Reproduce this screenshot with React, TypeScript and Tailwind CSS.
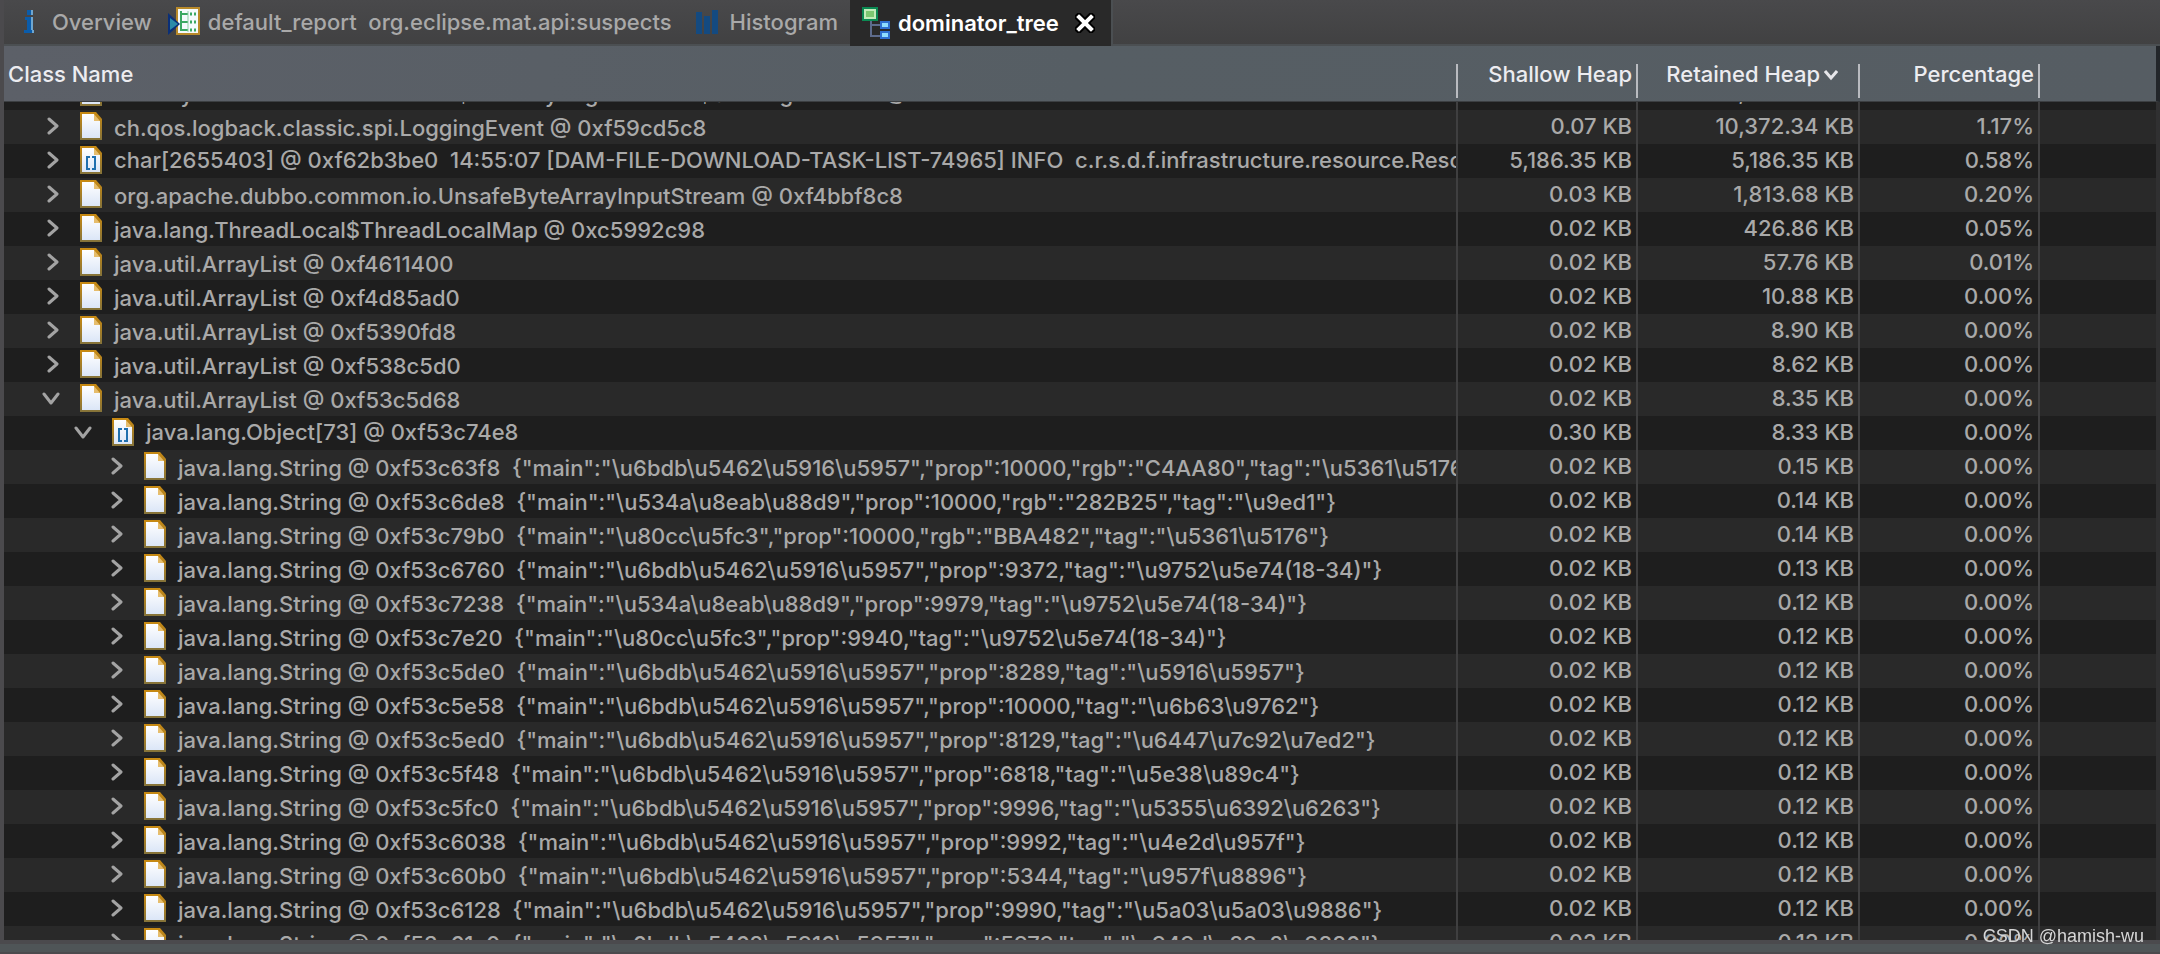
import { useLayoutEffect, useRef } from "react";
import clsx from "clsx";

type Row = {
  name: string;
  shallow: string;
  retained: string;
  percent: string;
  level?: number;
  open?: boolean;
  array?: boolean;
};

const str = (name: string, retained: string): Row => ({
  name: "java.lang.String @ " + name,
  shallow: "0.02 KB",
  retained,
  percent: "0.00%",
  level: 2,
});

const rows: Row[] = [
  { name: "io.netty.buffer.PoolThreadCache$MemoryRegionCache$SubPageEntries @ 0xf59cc8a0", shallow: "0.07 KB", retained: "10,372.34 KB", percent: "1.17%" },
  { name: "ch.qos.logback.classic.spi.LoggingEvent @ 0xf59cd5c8", shallow: "0.07 KB", retained: "10,372.34 KB", percent: "1.17%" },
  {
    name: "char[2655403] @ 0xf62b3be0  14:55:07 [DAM-FILE-DOWNLOAD-TASK-LIST-74965] INFO  c.r.s.d.f.infrastructure.resource.Reso",
    shallow: "5,186.35 KB",
    retained: "5,186.35 KB",
    percent: "0.58%",
    array: true,
  },
  { name: "org.apache.dubbo.common.io.UnsafeByteArrayInputStream @ 0xf4bbf8c8", shallow: "0.03 KB", retained: "1,813.68 KB", percent: "0.20%" },
  { name: "java.lang.ThreadLocal$ThreadLocalMap @ 0xc5992c98", shallow: "0.02 KB", retained: "426.86 KB", percent: "0.05%" },
  { name: "java.util.ArrayList @ 0xf4611400", shallow: "0.02 KB", retained: "57.76 KB", percent: "0.01%" },
  { name: "java.util.ArrayList @ 0xf4d85ad0", shallow: "0.02 KB", retained: "10.88 KB", percent: "0.00%" },
  { name: "java.util.ArrayList @ 0xf5390fd8", shallow: "0.02 KB", retained: "8.90 KB", percent: "0.00%" },
  { name: "java.util.ArrayList @ 0xf538c5d0", shallow: "0.02 KB", retained: "8.62 KB", percent: "0.00%" },
  { name: "java.util.ArrayList @ 0xf53c5d68", shallow: "0.02 KB", retained: "8.35 KB", percent: "0.00%", open: true },
  { name: "java.lang.Object[73] @ 0xf53c74e8", shallow: "0.30 KB", retained: "8.33 KB", percent: "0.00%", level: 1, open: true, array: true },
  str('0xf53c63f8  {"main":"\\u6bdb\\u5462\\u5916\\u5957","prop":10000,"rgb":"C4AA80","tag":"\\u5361\\u5176"}', "0.15 KB"),
  str('0xf53c6de8  {"main":"\\u534a\\u8eab\\u88d9","prop":10000,"rgb":"282B25","tag":"\\u9ed1"}', "0.14 KB"),
  str('0xf53c79b0  {"main":"\\u80cc\\u5fc3","prop":10000,"rgb":"BBA482","tag":"\\u5361\\u5176"}', "0.14 KB"),
  str('0xf53c6760  {"main":"\\u6bdb\\u5462\\u5916\\u5957","prop":9372,"tag":"\\u9752\\u5e74(18-34)"}', "0.13 KB"),
  str('0xf53c7238  {"main":"\\u534a\\u8eab\\u88d9","prop":9979,"tag":"\\u9752\\u5e74(18-34)"}', "0.12 KB"),
  str('0xf53c7e20  {"main":"\\u80cc\\u5fc3","prop":9940,"tag":"\\u9752\\u5e74(18-34)"}', "0.12 KB"),
  str('0xf53c5de0  {"main":"\\u6bdb\\u5462\\u5916\\u5957","prop":8289,"tag":"\\u5916\\u5957"}', "0.12 KB"),
  str('0xf53c5e58  {"main":"\\u6bdb\\u5462\\u5916\\u5957","prop":10000,"tag":"\\u6b63\\u9762"}', "0.12 KB"),
  str('0xf53c5ed0  {"main":"\\u6bdb\\u5462\\u5916\\u5957","prop":8129,"tag":"\\u6447\\u7c92\\u7ed2"}', "0.12 KB"),
  str('0xf53c5f48  {"main":"\\u6bdb\\u5462\\u5916\\u5957","prop":6818,"tag":"\\u5e38\\u89c4"}', "0.12 KB"),
  str('0xf53c5fc0  {"main":"\\u6bdb\\u5462\\u5916\\u5957","prop":9996,"tag":"\\u5355\\u6392\\u6263"}', "0.12 KB"),
  str('0xf53c6038  {"main":"\\u6bdb\\u5462\\u5916\\u5957","prop":9992,"tag":"\\u4e2d\\u957f"}', "0.12 KB"),
  str('0xf53c60b0  {"main":"\\u6bdb\\u5462\\u5916\\u5957","prop":5344,"tag":"\\u957f\\u8896"}', "0.12 KB"),
  str('0xf53c6128  {"main":"\\u6bdb\\u5462\\u5916\\u5957","prop":9990,"tag":"\\u5a03\\u5a03\\u9886"}', "0.12 KB"),
  str('0xf53c61a0  {"main":"\\u6bdb\\u5462\\u5916\\u5957","prop":5979,"tag":"\\u949d\\u89c2\\u9886"}', "0.12 KB"),
];

function InfoIcon() {
  return (
    <svg width="12" height="24" viewBox="0 0 12 24" aria-hidden="true">
      <path d="M3 0h5v5H3zM1 7h7v13h2v3H0v-3h3V10H1z" fill="#0a5cab" />
      <path d="M7 0h2v5H7zM7 7h2v13H7zM8 20h2v3H8z" fill="#6fa6cf" />
    </svg>
  );
}

function ReportIcon() {
  return (
    <svg width="32" height="30" viewBox="0 0 32 30" aria-hidden="true">
      <path d="M9 1h22v26H9z" fill="#f4fafc" stroke="#b98a2a" strokeWidth="2" />
      <path d="M13 4v20M12 7h8M13 15h7M12 23h8" fill="none" stroke="#3aa862" strokeWidth="2" />
      <path d="M20 4v21" stroke="#8fd0a5" strokeWidth="1" />
      <path d="M22 7h2M26 7h2M22 15h2M26 15h2M22 23h2M26 23h2" stroke="#3aa862" strokeWidth="3" />
      <path d="M0 6v22l12-11z" fill="#0a2f78" />
      <path d="M2 11v12l8-6z" fill="#2b8ba8" />
    </svg>
  );
}

function HistogramIcon() {
  return (
    <svg width="22" height="24" viewBox="0 0 22 24" aria-hidden="true">
      <path d="M0 2h6v22H0zM8 6h6v18H8zM16 0h6v24h-6z" fill="#144a80" />
    </svg>
  );
}

function TreeIcon() {
  return (
    <svg width="28" height="32" viewBox="0 0 28 32" aria-hidden="true">
      <path d="M9 14v15h10M9 18h10" fill="none" stroke="#5d6b8c" strokeWidth="2" />
      <path d="M1 1h14v12H1z" fill="#7cc871" stroke="#0b8a53" strokeWidth="2" />
      <path d="M3 3h10v8H3z" fill="none" stroke="#c3ecba" strokeWidth="2" />
      <path d="M18 14h10v8H18zM18 24h10v8H18z" fill="#2f6fd0" />
      <path d="M20 16h6v4h-6zM20 26h6v4h-6z" fill="#8fdcff" />
    </svg>
  );
}

function CloseIcon() {
  return (
    <svg width="20" height="20" viewBox="0 0 20 20" aria-hidden="true">
      <path d="M4 4l12 12M16 4L4 16" stroke="#000" strokeWidth="8" strokeLinecap="square" />
      <path d="M4 4l12 12M16 4L4 16" stroke="#fff" strokeWidth="4" strokeLinecap="square" />
    </svg>
  );
}

function FileIcon({ array }: { array?: boolean }) {
  return (
    <svg className="shrink-0" width="22" height="28" viewBox="0 0 22 28" aria-hidden="true">
      <defs>
        <linearGradient id="paper" x1="0" y1="0" x2="0" y2="1">
          <stop offset="0" stopColor="#ffffff" />
          <stop offset="1" stopColor="#dbe6f7" />
        </linearGradient>
        <linearGradient id="paperEdge" x1="0" y1="0" x2="0" y2="1">
          <stop offset="0" stopColor="#c98a12" />
          <stop offset="1" stopColor="#85733a" />
        </linearGradient>
      </defs>
      <path d="M0 0h16l6 7v21H0z" fill="url(#paperEdge)" />
      <path d="M2 2h12v7h6v17H2z" fill="url(#paper)" />
      <path d="M14 2l6 7h-6z" fill="#e6bd6c" />
      {array && (
        <path d="M10 11H7v12h3M12 11h3v12h-3" fill="none" stroke="#1f6fae" strokeWidth="2" />
      )}
    </svg>
  );
}

function Chevron({ open }: { open?: boolean }) {
  return (
    <svg width="18" height="18" viewBox="0 0 18 18" fill="none" stroke="#a3a3a3" strokeWidth="3" strokeLinecap="round" strokeLinejoin="round" aria-hidden="true">
      <path d={open ? "M2 5l7 9 7-9" : "M7 2l8 7-8 7"} />
    </svg>
  );
}

const indent = ["pl-[38px]", "pl-[70px]", "pl-[102px]"];

function TreeRow({ row }: { row: Row }) {
  const number = "border-r-2 border-[#3f3f40] pr-1 text-right align-top leading-8";
  return (
    <tr className="h-[34px] odd:bg-[#1e1e1e] even:bg-[#292929]">
      <td className="overflow-hidden border-r-2 border-[#3f3f40] align-top">
        <div className={clsx("flex h-8 items-center whitespace-pre", indent[row.level ?? 0])}>
          <button type="button" aria-label={row.open ? "Collapse" : "Expand"} className="mr-5 shrink-0">
            <Chevron open={row.open} />
          </button>
          <FileIcon array={row.array} />
          <span className={clsx("ml-3", !row.array && "pt-1")}>{row.name}</span>
        </div>
      </td>
      <td className={number}>{row.shallow}</td>
      <td className={number}>{row.retained}</td>
      <td className={number}>{row.percent}</td>
      <td className="border-r-4 border-[#303031]" />
    </tr>
  );
}

function Header({ label, sorted, first }: { label: string; sorted?: boolean; first?: boolean }) {
  return (
    <th className="border-b border-[#3c3f42] pb-[3px] align-bottom font-[450]">
      <div
        className={clsx(
          "flex h-[34px] items-start border-r-2 border-[#b9bbc0] leading-5",
          first ? "pl-1" : "justify-end pr-1",
        )}
      >
        {label}
        {sorted && (
          <svg className="mt-[2px] mr-4 ml-1" width="14" height="18" viewBox="0 0 14 18" fill="none" stroke="#e6e6ea" strokeWidth="3" aria-hidden="true">
            <path d="M1 5l6 7 6-7" />
          </svg>
        )}
      </div>
    </th>
  );
}

export default function App() {
  const viewport = useRef<HTMLDivElement>(null);

  // the list is scrolled down by most of one row
  useLayoutEffect(() => {
    if (viewport.current) viewport.current.scrollTop = 26;
  }, []);

  const tab = "flex h-full items-center whitespace-pre";

  return (
    <div className="relative flex h-screen flex-col bg-[#4b4a4d] pl-1 font-['Inter','Liberation_Sans',sans-serif] text-[22px] leading-7 font-[450] text-[#a9a9a9]">
      <nav className="flex h-[46px] shrink-0 items-center border-b-2 border-[#4b4f52] bg-linear-to-b from-[#49494b] to-[#414142] font-medium">
        <button type="button" className={clsx(tab, "ml-5 gap-4")}>
          <InfoIcon />
          Overview
        </button>
        <button type="button" className={clsx(tab, "ml-4 gap-2")}>
          <ReportIcon />
          {"default_report  org.eclipse.mat.api:suspects"}
        </button>
        <button type="button" className={clsx(tab, "ml-6 gap-3")}>
          <HistogramIcon />
          Histogram
        </button>
        <div className="-mb-[2px] ml-3 flex h-[46px] items-center border-r-2 border-[#4b4f52] bg-[#292929] pr-4 pl-3 font-semibold text-white">
          <button type="button" className={clsx(tab, "gap-2")}>
            <TreeIcon />
            dominator_tree
          </button>
          <button type="button" aria-label="Close" className="ml-4">
            <CloseIcon />
          </button>
        </div>
      </nav>

      <div ref={viewport} className="min-h-0 flex-1 overflow-hidden">
        <table className="w-full table-fixed border-separate border-spacing-0">
          <colgroup>
            <col />
            <col className="w-[180px]" />
            <col className="w-[222px]" />
            <col className="w-[180px]" />
            <col className="w-[120px]" />
          </colgroup>
          <thead className="sticky top-0 z-10 h-14 bg-linear-to-r from-[#5c6068] via-[#565e64] to-[#565d63] text-[#ececf0]">
            <tr>
              <Header label="Class Name" first />
              <Header label="Shallow Heap" />
              <Header label="Retained Heap" sorted />
              <Header label="Percentage" />
              <td className="border-r-4 border-b border-r-[#23262a] border-b-[#3c3f42]" />
            </tr>
          </thead>
          <tbody>
            {rows.map((row) => (
              <TreeRow key={row.name} row={row} />
            ))}
          </tbody>
        </table>
      </div>

      <footer className="mt-1 mb-[2px] -ml-1 h-2 shrink-0 bg-[#4f5557]" />
      <p className="absolute right-4 bottom-1 z-20 font-['Liberation_Sans',sans-serif] text-lg leading-7 font-normal text-[#d6d6d6]">
        CSDN @hamish-wu
      </p>
    </div>
  );
}
